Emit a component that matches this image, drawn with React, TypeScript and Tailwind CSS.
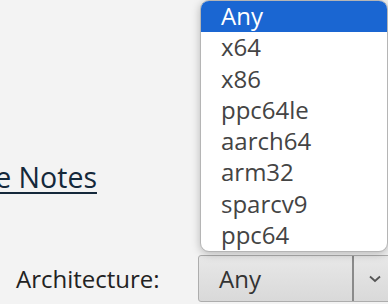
import { useState } from "react";

const ARCHES = ["Any", "x64", "x86", "ppc64le", "aarch64", "arm32", "sparcv9", "ppc64"];

export default function App() {
  const [selected] = useState("Any");

  return (
    <div
      className="relative h-[304px] w-[388px] overflow-hidden bg-[#f3f3f3]"
      style={{ fontFamily: '"Open Sans", "Noto Sans", sans-serif' }}
    >
      {/* page content */}
      <div className="flex h-full flex-col">
        <div className="mt-[159px] -ml-[91px] whitespace-nowrap">
          <a href="#" className="text-[28.5px] leading-[36px] text-[#14283a] underline underline-offset-[4px] decoration-[1.5px]">
            Release Notes
          </a>
        </div>

        <div className="mt-auto mb-[2px] flex items-center">
          <label className="w-[198px] flex-none pl-[16px] text-[24px] text-[#222]">Architecture:</label>
          <div className="flex h-[47px] w-[200px] flex-none items-stretch rounded-l-[3px] border border-[#adadad] bg-gradient-to-b from-[#e8e8e8] to-[#d9d9d9]">
            <span className="flex flex-1 items-center pl-[20px] text-[24px] text-[#333]">{selected}</span>
            <span className="flex w-[45px] items-center justify-center border-l-2 border-[#8a8a8a] pr-[1px]">
              <svg width="12" height="8" viewBox="0 0 12 8" fill="none">
                <path d="M1 1.5 L6 6 L11 1.5" stroke="#555" strokeWidth="1.8" />
              </svg>
            </span>
          </div>
        </div>
      </div>

      {/* open dropdown */}
      <div className="absolute left-[200px] top-0 w-[188px] overflow-hidden rounded-[9px] border border-[#b5b5b5] bg-white shadow-[0_2px_8px_rgba(0,0,0,0.25)]">
        {ARCHES.map((a) => (
          <div
            key={a}
            className={
              a === selected
                ? "h-[31.25px] bg-[#1a66d2] pl-[20px] text-[24px] leading-[30.5px] text-white"
                : "h-[31.25px] pl-[20px] text-[24px] leading-[30.5px] text-[#444]"
            }
          >
            {a}
          </div>
        ))}
      </div>
    </div>
  );
}
